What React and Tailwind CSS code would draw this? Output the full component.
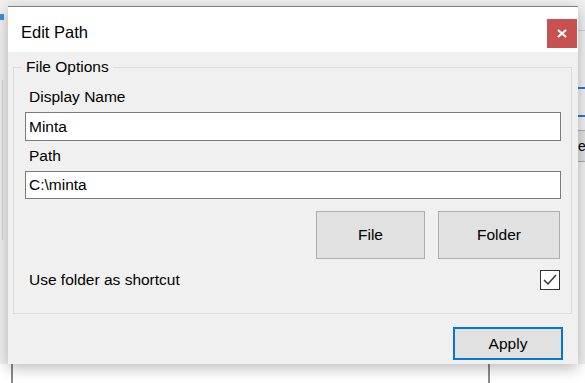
export default function App() {
  return (
    <div
      className="relative w-[585px] h-[383px] overflow-hidden bg-white text-black"
      style={{ fontFamily: '"Liberation Sans", Arial, sans-serif' }}
    >
      {/* windows behind the dialog */}
      <div className="absolute left-0 top-0 w-[585px] h-[364px] bg-[#f0f0f0]" />
      <div className="absolute left-0 top-[14px] w-[4px] h-[6px] bg-[#3c8fd8]" />
      <div className="absolute left-[2px] top-[80px] w-[1px] h-[160px] bg-[#d4d4d4]" />
      <div className="absolute left-[11px] top-[364px] w-[2px] h-[19px] bg-[#8a8a8a]" />
      <div className="absolute left-[488px] top-[364px] w-[2px] h-[19px] bg-[#8a8a8a]" />
      <div className="absolute left-[578px] top-[30px] w-[7px] h-[1px] bg-[#cfcfcf]" />
      <div className="absolute left-[578px] top-[87px] w-[7px] h-[2px] bg-[#1e7ad4]" />
      <div className="absolute left-[578px] top-[115px] w-[7px] h-[2px] bg-[#1e7ad4]" />
      <div className="absolute left-[578px] top-[130px] w-[7px] h-[32px] border-y border-[#adadad] bg-[#e1e1e1] text-[14px] leading-[30px]">
        e
      </div>

      {/* dialog */}
      <div className="absolute left-[8px] top-[6px] w-[570px] h-[358px] flex flex-col bg-[#f0f0f0] border-t border-[#7f7f7f] shadow-[0_4px_14px_rgba(0,0,0,0.28)]">
        <div className="h-[45px] bg-white flex items-start justify-between pl-[13px] pr-[1px]">
          <span className="mt-[15px] text-[16.5px] leading-[20px]">Edit Path</span>
          <div className="mt-[12px] w-[30px] h-[29px] bg-[#c75050] flex items-center justify-center">
            <svg width="10" height="9" viewBox="0 0 10 9">
              <path d="M1 1 L9 8 M9 1 L1 8" stroke="white" strokeWidth="2.2" />
            </svg>
          </div>
        </div>

        <div className="flex-1 flex flex-col px-[5px] pt-[15px]">
          <div className="relative border border-[#dcdcdc] mr-[1px] h-[247px] flex flex-col pl-[11px] pr-[10px] pt-[20px]">
            <span className="absolute left-[8px] top-[-10px] bg-[#f0f0f0] px-[4px] text-[15.5px] leading-[18px]">
              File Options
            </span>
            <div className="text-[15.5px] leading-[18px] pl-[4px]">Display Name</div>
            <div className="mt-[6px] h-[29px] border border-[#7a7a7a] bg-white flex items-center pl-[3px] text-[15.5px]">
              Minta
            </div>
            <div className="mt-[6px] text-[15.5px] leading-[18px] pl-[4px]">Path</div>
            <div className="mt-[6px] h-[28px] border border-[#7a7a7a] bg-white flex items-center pl-[3px] text-[15.5px]">
              C:\minta
            </div>
            <div className="mt-[12px] flex justify-end gap-[13px] pr-[1px]">
              <button className="w-[109px] h-[48px] bg-[#e1e1e1] border border-[#adadad] text-[15.5px]">
                File
              </button>
              <button className="w-[122px] h-[48px] bg-[#e1e1e1] border border-[#adadad] text-[15.5px]">
                Folder
              </button>
            </div>
            <div className="mt-[11px] flex items-center justify-between pr-[1px]">
              <span className="text-[15.5px] leading-[18px] pl-[4px]">Use folder as shortcut</span>
              <div className="w-[20px] h-[20px] border border-[#333333] bg-white flex items-center justify-center">
                <svg width="14" height="12" viewBox="0 0 14 12">
                  <path d="M1 6 L5 10 L13 1" fill="none" stroke="#333333" strokeWidth="1.5" />
                </svg>
              </div>
            </div>
          </div>
          <div className="flex justify-end mt-[13px] pr-[10px]">
            <button className="w-[110px] h-[33px] bg-[#e1e1e1] border-2 border-[#0078d7] text-[15.5px]">
              Apply
            </button>
          </div>
        </div>
      </div>
    </div>
  );
}
